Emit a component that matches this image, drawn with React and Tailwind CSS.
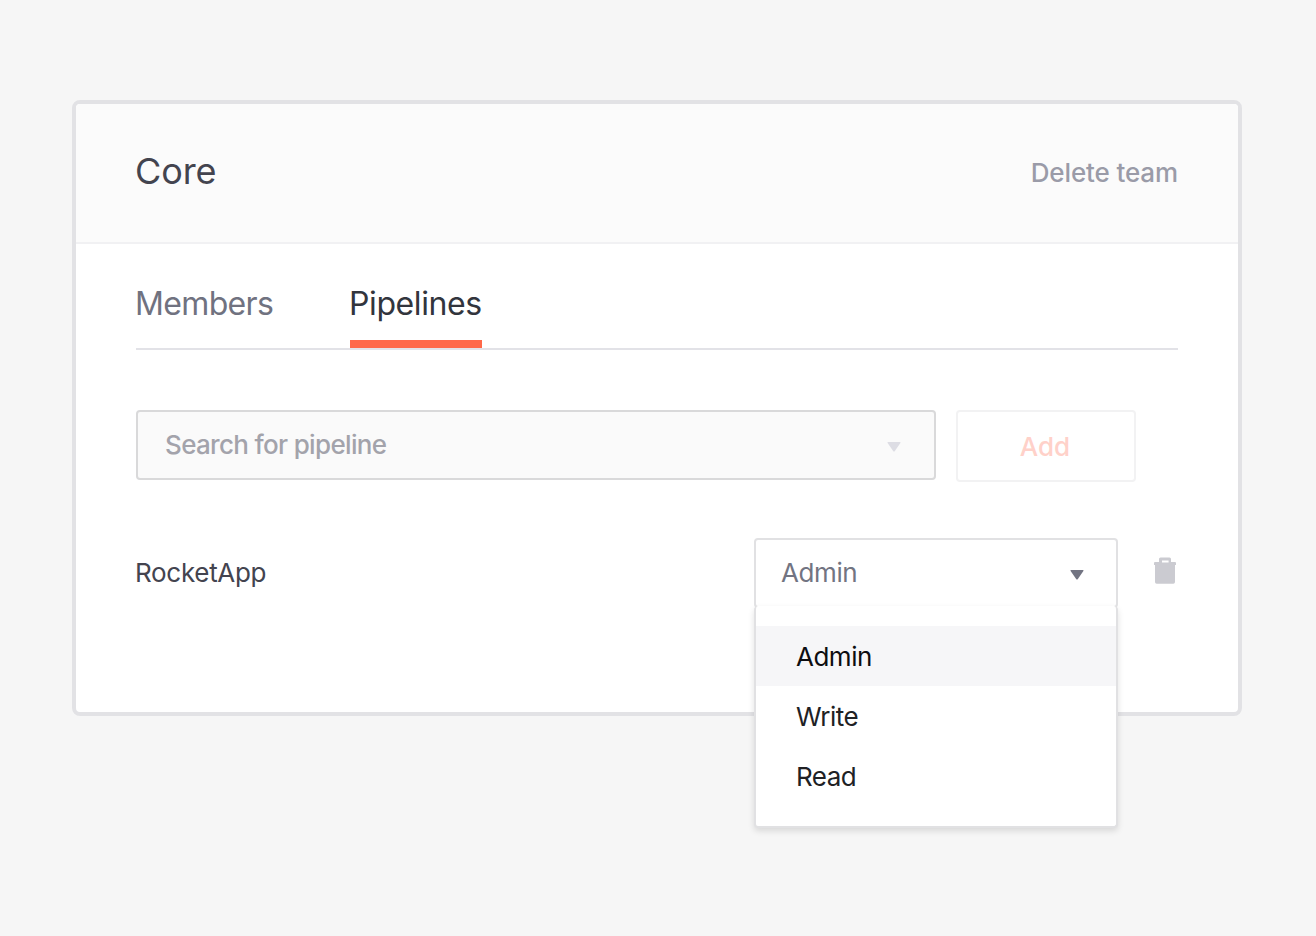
import React from "react";

function Caret({ className }) {
  return (
    <svg className={className} width="14" height="10" viewBox="0 0 14 10" fill="currentColor" aria-hidden="true">
      <path d="M1.2 0H12.8Q14 0 13.4 1.1L7.7 9.2Q7 10 6.3 9.2L.6 1.1Q0 0 1.2 0Z" />
    </svg>
  );
}

function TrashIcon() {
  return (
    <svg width="22" height="27" viewBox="0 0 22 27" fill="#cbcbd1" aria-hidden="true">
      <path
        fillRule="evenodd"
        d="M5 5V2Q5 .5 6.5 .5H15.5Q17 .5 17 2V5H21Q22 5 22 6V8H21V25Q21 26.7 19.3 26.7H2.7Q1 26.7 1 25V8H0V6Q0 5 1 5ZM8 3.6V5.4H14.6V3.6Z"
      />
    </svg>
  );
}

function Header() {
  return (
    <header className="flex h-[140px] items-center justify-between rounded-t border-b-2 border-[#f1f1f3] bg-[#fbfbfb] px-[60px]">
      <h1 className="-ml-px pb-[5px] text-[36px] leading-[48px] tracking-[-0.1px] text-[#43444f]">Core</h1>
      <button className="text-[26px] leading-8 font-medium tracking-[-0.12px] text-[#9a9ba8]">Delete team</button>
    </header>
  );
}

function Tabs() {
  return (
    <nav className="flex h-[106px] items-stretch gap-[76px] border-b-2 border-[#e2e2e7] pt-[38px] text-[32px] leading-[44px]">
      <button className="w-[138px] border-b-8 border-transparent pb-3.5 text-left tracking-[-0.65px] whitespace-nowrap text-[#707280]">
        <span className="-ml-px">Members</span>
      </button>
      <button className="w-[132px] border-b-8 border-[#ff6849] pb-3.5 text-left tracking-[-0.4px] whitespace-nowrap text-[#32353d]">
        <span className="-ml-px">Pipelines</span>
      </button>
    </nav>
  );
}

const roles = ["Admin", "Write", "Read"];

function RoleSelect() {
  return (
    <div className="relative h-[70px] w-[364px]">
      <button className="flex h-[70px] w-full items-center justify-between rounded border-2 border-[#e1e1e3] bg-white pr-8 pb-px pl-[26px] text-[26px] text-[#727482]">
        <span className="-ml-px tracking-[-0.4px]">Admin</span>
        <Caret className="mt-1" />
      </button>
      <ul className="absolute top-[68px] left-0 w-full rounded border-x-2 border-b-2 border-[#e1e1e3] bg-white py-5 text-[26px] leading-[62px] text-[#202124] shadow-[0_3px_6px_rgba(0,0,0,0.12)]">
        {roles.map((role, i) => (
          <li key={role} className={i === 0 ? "h-[60px] bg-[#f6f6f8] pl-10 text-[#0d0d10]" : "h-[60px] pl-10"}>
            <span className="tracking-[-0.5px]">{role}</span>
          </li>
        ))}
      </ul>
    </div>
  );
}

export default function App() {
  return (
    <main className="h-[936px] w-[1316px] bg-[#f6f6f6] pt-[100px] pl-[72px] font-['Inter',sans-serif]">
      <section className="h-[616px] w-[1170px] rounded-lg border-4 border-[#e2e2e5] bg-white">
        <Header />
        <div className="px-[60px]">
          <Tabs />
          <div className="mt-[60px] flex items-start gap-5">
            <div className="flex h-[70px] w-[800px] items-center justify-between rounded border-2 border-[#d9d9da] bg-[#fafafa] pr-[33px] pl-[27px] text-[26px] text-[#a3a3ab]">
              <span className="pb-0.5 font-medium tracking-[-0.67px]">Search for pipeline</span>
              <Caret className="mt-[3px] text-[#dddde4]" />
            </div>
            <button className="h-[72px] w-[180px] rounded border-2 border-[#f2f2f3] bg-white pr-0.5 text-[26px] font-medium text-[#ffd1c9]">
              Add
            </button>
          </div>
          <div className="mt-14 flex items-start">
            <span className="-ml-px w-[619px] pt-[15px] text-[26px] leading-10 tracking-[-0.3px] text-[#43444f]">
              RocketApp
            </span>
            <RoleSelect />
            <button className="mt-[19px] ml-9" aria-label="Remove pipeline">
              <TrashIcon />
            </button>
          </div>
        </div>
      </section>
    </main>
  );
}
